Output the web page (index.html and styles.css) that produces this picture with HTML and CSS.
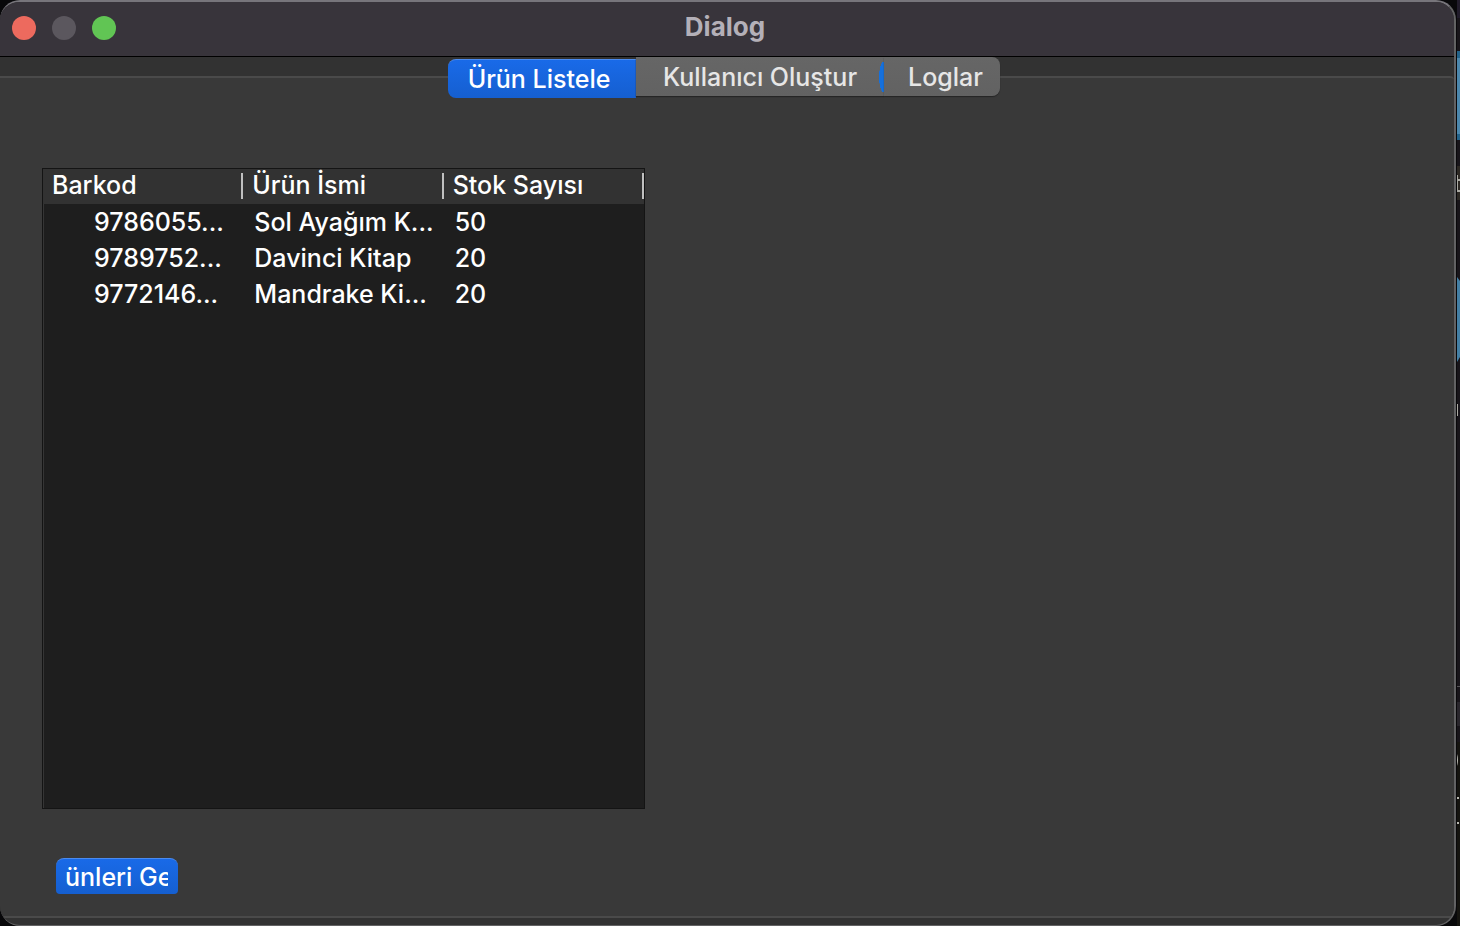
FILE: index.html
```html
<!DOCTYPE html>
<html lang="tr">
<head>
<meta charset="utf-8">
<title>Dialog</title>
<link rel="stylesheet" href="styles.css">
</head>
<body>
<div class="desktop">
  <main class="window">
    <header class="titlebar">
      <div class="controls">
        <button class="control close" type="button" aria-label="Kapat"></button>
        <button class="control minimize" type="button" aria-label="Küçült" disabled></button>
        <button class="control expand" type="button" aria-label="Büyüt"></button>
      </div>
      <h1 class="title">Dialog</h1>
    </header>
    <div class="content">
      <div class="tabs" role="tablist">
        <button class="tab active" type="button" role="tab" aria-selected="true">Ürün Listele</button>
        <button class="tab middle" type="button" role="tab" aria-selected="false">Kullanıcı Oluştur</button>
        <button class="tab last" type="button" role="tab" aria-selected="false">Loglar</button>
      </div>
      <section class="pane" role="tabpanel">
        <div class="list">
          <table class="products">
            <thead>
              <tr><th scope="col">Barkod</th><th scope="col">Ürün İsmi</th><th scope="col">Stok Sayısı</th></tr>
            </thead>
            <tbody>
              <tr><td>9786055...</td><td>Sol Ayağım K...</td><td>50</td></tr>
              <tr><td>9789752...</td><td>Davinci Kitap</td><td>20</td></tr>
              <tr><td>9772146...</td><td>Mandrake Ki...</td><td>20</td></tr>
            </tbody>
          </table>
        </div>
        <button class="fetch" type="button"><span class="fetch-label">ünleri Ge</span></button>
      </section>
    </div>
  </main>
  <svg class="backdrop" width="4" height="926" viewBox="0 0 4 926" aria-hidden="true">
    <path fill="#18151a" d="M1 0h3v926H1z"/>
    <path fill="#211c2b" d="M1 0h3v18H1z"/>
    <path fill="#4b87ad" d="M1 51h3v89H1z"/>
    <path fill="#23638b" d="M1 51h3v7H1zM1 134h3v6H1z"/>
    <path fill="#2d2924" d="M1 166h3v34H1z"/>
    <path fill="#aaa9a2" d="M1 179h3v2H1zM1 190h3v2H1zM1 175h1v15H1z"/>
    <path fill="#437fa5" d="M1 277l3 4v76l-3 5z"/>
    <path fill="#aaa9a2" d="M1 404h1v12H1z"/>
    <path fill="#555356" d="M1 686h3v1H1z"/>
    <path fill="#29262c" d="M1 702h3v24H1z"/>
    <path fill="#151410" d="M1 742h3v184H1z"/>
    <path fill="#b9b8b0" d="M1 754q2 6 0 12zM1 797h2v2H1zM1 822h2v2H1z"/>
  </svg>
</div>
</body>
</html>
```
FILE: styles.css
```css
* {
  box-sizing: border-box;
}

body {
  margin: 0;
  background: #08080a;
  color: #ffffff;
  font-family: Inter, "Noto Sans", sans-serif;
  font-size: 25px;
  font-weight: 500;
}

button {
  border: 0;
  padding: 0;
  color: inherit;
  font: inherit;
}

.desktop {
  display: flex;
  min-height: 100vh;
}

.window {
  flex: 1;
  display: flex;
  flex-direction: column;
  overflow: hidden;
  border: 2px solid #626263;
  border-top-color: #77757b;
  border-bottom-width: 1px;
  border-left: 0;
  border-radius: 20px;
  background: #323232;
}

.backdrop {
  flex: none;
}

.titlebar {
  display: grid;
  grid-template-columns: 1fr auto 1fr;
  align-items: center;
  height: 55px;
  padding: 0 16px 2px 12px;
  border-bottom: 1px solid #000000;
  background: #38343b;
}

.controls {
  display: flex;
  gap: 16px;
}

.control {
  width: 24px;
  height: 24px;
  border-radius: 50%;
}

.close {
  background: #ed6a5e;
}

.minimize {
  background: #5b575e;
}

.expand {
  background: #61c554;
}

.title {
  margin: 0;
  padding-bottom: 2px;
  color: #b4b0b8;
  font-size: 26px;
  font-weight: 700;
  line-height: 32px;
}

.content {
  flex: 1;
  display: flex;
  flex-direction: column;
  padding-bottom: 7px;
}

.tabs {
  z-index: 1;
  display: flex;
  justify-content: center;
  height: 41px;
  margin-bottom: -22px;
  padding-right: 6px;
}

.tab {
  height: 39px;
  background: linear-gradient(#666666, #626262);
  box-shadow: 0 1px 1px #252525;
  color: #e6e6e6;
  line-height: 40px;
}

.active {
  width: 188px;
  margin-top: 2px;
  padding-right: 6px;
  border-top: 1px solid #4b8bf0;
  border-radius: 8px 0 0 8px;
  background: linear-gradient(#196ae8, #155fd0);
  box-shadow: none;
  color: #ffffff;
  line-height: 36px;
}

.middle {
  width: 248px;
  background:
    radial-gradient(ellipse 5px 16px at right center, #1670dc 96%, transparent) right center / 5px 30px no-repeat,
    linear-gradient(#666666, #626262);
}

.last {
  width: 116px;
  padding-left: 7px;
  border-radius: 0 8px 8px 0;
}

.pane {
  flex: 1;
  display: flex;
  flex-direction: column;
  align-items: flex-start;
  gap: 49px;
  padding: 90px 42px 22px;
  border-top: 2px solid #4a4a4a;
  border-bottom: 2px solid #4a4a4a;
  border-radius: 0 4px 4px 0;
  background: #393939;
}

.list {
  flex: 1;
  width: 603px;
  border: 1px solid #141414;
  background: #1e1e1e;
  box-shadow: inset 1px 0 #353535;
}

.products {
  width: 100%;
  border-collapse: collapse;
  table-layout: fixed;
  line-height: 36px;
  text-align: left;
}

.products thead {
  background: #323232;
}

.products th {
  height: 35px;
  padding: 0 0 2px 9px;
  background: linear-gradient(#c0c0c0, #c0c0c0) right 4px / 2px 26px no-repeat;
  font-weight: 500;
  line-height: 33px;
}

.products td {
  height: 36px;
  padding: 0 0 0 11px;
  white-space: nowrap;
}

.products td:first-child {
  padding-left: 51px;
}

.fetch {
  width: 122px;
  height: 36px;
  margin-left: 14px;
  padding: 0 10px 0 9px;
  border-top: 1px solid #4b8bf0;
  border-radius: 8px 8px 4px 4px;
  background: linear-gradient(#196ae8, #155fd0);
}

.fetch-label {
  display: block;
  overflow: hidden;
  line-height: 36px;
  text-align: left;
  white-space: nowrap;
}
```
